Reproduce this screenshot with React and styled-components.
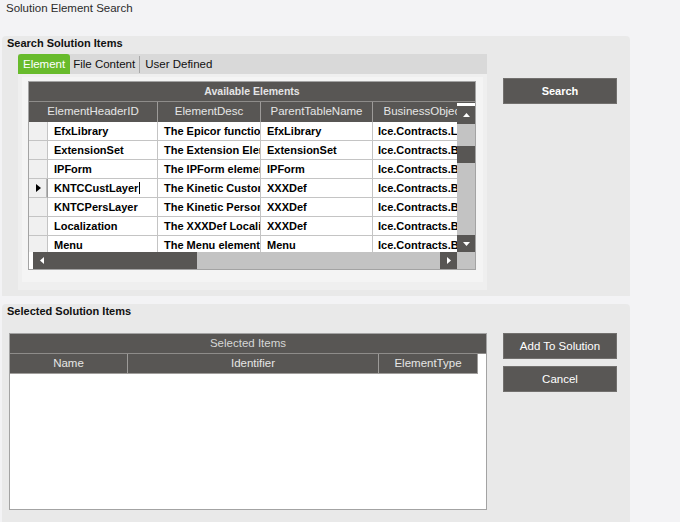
import React from "react";
import styled, { createGlobalStyle } from "styled-components";

const DARK = "#585654";
const GREEN = "#68bb2c";
const LINE = "#c4c4c4";

const GlobalStyle = createGlobalStyle`
  html, body {
    margin: 0;
    padding: 0;
    background: #f3f3f5;
  }
  body {
    font-family: "Liberation Sans", Arial, sans-serif;
  }
  * {
    box-sizing: border-box;
  }
`;

const Screen = styled.div`
  width: 680px;
  height: 522px;
  overflow: hidden;
  background: #f3f3f5;
`;

const WindowTitle = styled.div`
  height: 36px;
  padding: 1px 0 0 6px;
  font-size: 11.5px;
  line-height: 14px;
  color: #2b2b2b;
`;

const Panel = styled.div`
  margin: ${(p) => p.$gap || 0}px 0 0 2px;
  width: 628px;
  height: ${(p) => p.$height}px;
  background: #e9e9e9;
  border-radius: 4px 4px 0 0;
`;

const PanelHeader = styled.div`
  height: ${(p) => p.$height}px;
  padding: 1px 0 0 5px;
  font-size: 11px;
  font-weight: bold;
  line-height: 13px;
  color: #111;
`;

const PanelBody = styled.div`
  display: flex;
  align-items: flex-start;
  padding-left: ${(p) => p.$indent}px;
`;

const SideColumn = styled.div`
  display: flex;
  flex-direction: column;
  gap: 7px;
  width: 114px;
  margin-left: 16px;
  padding-top: ${(p) => p.$top || 0}px;
`;

const ActionButton = styled.button`
  height: 26px;
  width: 100%;
  padding: 0;
  background: #595755;
  border: 1px solid #72706e;
  color: #fff;
  font-family: inherit;
  font-size: ${(p) => (p.$bold ? "11px" : "11.5px")};
  font-weight: ${(p) => (p.$bold ? "bold" : "normal")};
  cursor: pointer;
`;

/* tab control */
const TabControl = styled.div`
  width: 469px;
  height: 236px;
  display: flex;
  flex-direction: column;
`;

const TabStrip = styled.div`
  height: 20px;
  flex: none;
  display: flex;
  align-items: stretch;
  background: #d9d9d9;
`;

const Tab = styled.div`
  display: flex;
  align-items: center;
  padding: 0 ${(p) => (p.$active ? 5 : 3)}px;
  font-size: 11.5px;
  color: ${(p) => (p.$active ? "#fff" : "#111")};
  background: ${(p) => (p.$active ? GREEN : "transparent")};
  border-radius: 3px 3px 0 0;
`;

const TabDivider = styled.span`
  width: 1px;
  margin: 2px 2px 1px 1px;
  background: #a9a9a9;
`;

const TabFrame = styled.div`
  flex: 1;
  padding: 3px 4px 8px 4px;
  background: #efefef;
`;

const TabPage = styled.div`
  height: 100%;
  padding: 4px 0 0 6px;
  background: #f4f4f4;
`;

/* grids */
const DataGrid = styled.div`
  width: ${(p) => p.$w}px;
  height: ${(p) => p.$h}px;
  border: 1px solid #a3a3a3;
  background: ${(p) => p.$bg};
  display: flex;
  flex-direction: column;
  overflow: hidden;
`;

const GridTitle = styled.div`
  height: 20px;
  flex: none;
  background: ${DARK};
  border-bottom: 1px solid #8e8c8a;
  color: ${(p) => (p.$plain ? "#d6d6d6" : "#e4e4e4")};
  font-size: ${(p) => (p.$plain ? "11.5px" : "10.5px")};
  font-weight: ${(p) => (p.$plain ? "normal" : "bold")};
  line-height: 19px;
  text-align: center;
`;

const GridBody = styled.div`
  flex: 1;
  display: flex;
  min-height: 0;
`;

const GridMain = styled.div`
  width: 428px;
  flex: none;
  display: flex;
  flex-direction: column;
  overflow: hidden;
`;

const HeaderRow = styled.div`
  display: flex;
  flex: none;
  height: 20px;
  width: ${(p) => (p.$w ? `${p.$w}px` : "auto")};
  background: ${DARK};
  border-bottom: ${(p) => (p.$edged ? "1px solid #a09e9c" : "none")};
  overflow: hidden;
`;

const HeaderCell = styled.div`
  width: ${(p) => p.$w}px;
  flex: none;
  border-right: 1px solid #9d9b99;
  color: #e6e6e6;
  font-size: 11.5px;
  line-height: 19px;
  text-align: center;
  white-space: nowrap;
  overflow: hidden;
`;

const RowsViewport = styled.div`
  height: 130px;
  flex: none;
  overflow: hidden;
  background: #fff;
`;

const Row = styled.div`
  display: flex;
  height: 19px;
`;

const Selector = styled.div`
  width: 19px;
  flex: none;
  display: flex;
  align-items: center;
  justify-content: center;
  padding-left: 1px;
  background: #f0f0f0;
  border-right: 1px solid ${(p) => (p.$current ? "#9a9a9a" : LINE)};
  border-bottom: 1px solid ${LINE};
  box-shadow: ${(p) => (p.$current ? "inset -1px 0 0 #b8b8b8" : "none")};
`;

const Cell = styled.div`
  width: ${(p) => p.$w}px;
  flex: none;
  padding-left: ${(p) => (p.$last ? 5 : 6)}px;
  border-right: 1px solid ${LINE};
  border-bottom: 1px solid ${LINE};
  font-size: 11px;
  font-weight: bold;
  line-height: 18px;
  color: #000;
  white-space: nowrap;
  overflow: hidden;
`;

const Caret = styled.span`
  display: inline-block;
  width: 1px;
  height: 12px;
  margin-left: 1px;
  vertical-align: -2px;
  background: #000;
`;

/* scroll bars */
const HScroll = styled.div`
  height: 17px;
  flex: none;
  display: flex;
  background: #c3c3c3;
`;

const VScroll = styled.div`
  width: 18px;
  flex: none;
  display: flex;
  flex-direction: column;
  background: #c3c3c3;
`;

const ScrollGap = styled.div`
  flex: none;
  width: ${(p) => (p.$vertical ? "auto" : "4px")};
  height: ${(p) => (p.$vertical ? "4px" : "auto")};
  background: #fff;
  border-top: ${(p) => (p.$vertical ? `1px solid ${DARK}` : "none")};
`;

const ScrollPart = styled.div`
  flex: ${(p) => (p.$grow ? 1 : "none")};
  width: ${(p) => (p.$vertical ? "auto" : `${p.$len}px`)};
  height: ${(p) => (p.$vertical ? `${p.$len}px` : "auto")};
  background: ${(p) => (p.$dark ? DARK : "transparent")};
  display: flex;
  align-items: center;
  justify-content: center;
`;

const Arrow = ({ dir, color = "#fff" }) => {
  const shapes = {
    up: { w: 7, h: 4, pts: "0,4 3.5,0 7,4" },
    down: { w: 7, h: 4, pts: "0,0 7,0 3.5,4" },
    left: { w: 4, h: 7, pts: "4,0 4,7 0,3.5" },
    right: { w: 4, h: 7, pts: "0,0 4,3.5 0,7" },
    row: { w: 5, h: 8, pts: "0,0 5,4 0,8" },
  };
  const s = shapes[dir];
  return (
    <svg width={s.w} height={s.h} viewBox={`0 0 ${s.w} ${s.h}`}>
      <polygon points={s.pts} fill={color} />
    </svg>
  );
};

const elements = [
  ["EfxLibrary", "The Epicor function library", "EfxLibrary", "Ice.Contracts.Lib.EfxLibrary"],
  ["ExtensionSet", "The Extension Element", "ExtensionSet", "Ice.Contracts.BO.ExtensionSet"],
  ["IPForm", "The IPForm element", "IPForm", "Ice.Contracts.BO.IPForm"],
  ["KNTCCustLayer", "The Kinetic Customization", "XXXDef", "Ice.Contracts.BO.XXXDef"],
  ["KNTCPersLayer", "The Kinetic Personalization", "XXXDef", "Ice.Contracts.BO.XXXDef"],
  ["Localization", "The XXXDef Localization", "XXXDef", "Ice.Contracts.BO.XXXDef"],
  ["Menu", "The Menu element", "Menu", "Ice.Contracts.BO.Menu"],
];

const widths = [110, 103, 112, 102];
const currentRow = 3;

const AvailableGrid = () => (
  <DataGrid $w={448} $h={189} $bg="#c3c3c3">
    <GridTitle>Available Elements</GridTitle>
    <GridBody>
      <GridMain>
        <HeaderRow>
          <HeaderCell $w={129}>ElementHeaderID</HeaderCell>
          <HeaderCell $w={103}>ElementDesc</HeaderCell>
          <HeaderCell $w={112}>ParentTableName</HeaderCell>
          <HeaderCell $w={102}>BusinessObject</HeaderCell>
        </HeaderRow>
        <RowsViewport>
          {elements.map((row, i) => (
            <Row key={row[0]}>
              <Selector $current={i === currentRow}>
                {i === currentRow && <Arrow dir="row" color="#000" />}
              </Selector>
              {row.map((text, c) => (
                <Cell key={c} $w={widths[c]} $last={c === 3}>
                  {text}
                  {i === currentRow && c === 0 && <Caret />}
                </Cell>
              ))}
            </Row>
          ))}
        </RowsViewport>
        <HScroll>
          <ScrollGap />
          <ScrollPart $len={17} $dark>
            <Arrow dir="left" />
          </ScrollPart>
          <ScrollPart $len={147} $dark />
          <ScrollPart $grow />
          <ScrollPart $len={17} $dark>
            <Arrow dir="right" />
          </ScrollPart>
        </HScroll>
      </GridMain>
      <VScroll>
        <ScrollGap $vertical />
        <ScrollPart $vertical $len={18} $dark>
          <Arrow dir="up" />
        </ScrollPart>
        <ScrollPart $vertical $len={22} />
        <ScrollPart $vertical $len={17} $dark />
        <ScrollPart $vertical $grow />
        <ScrollPart $vertical $len={17} $dark>
          <Arrow dir="down" />
        </ScrollPart>
        <ScrollPart $vertical $len={17} />
      </VScroll>
    </GridBody>
  </DataGrid>
);

const SelectedGrid = () => (
  <DataGrid $w={478} $h={177} $bg="#fff">
    <GridTitle $plain>Selected Items</GridTitle>
    <HeaderRow $w={468} $edged>
      <HeaderCell $w={118}>Name</HeaderCell>
      <HeaderCell $w={251}>Identifier</HeaderCell>
      <HeaderCell $w={99}>ElementType</HeaderCell>
    </HeaderRow>
  </DataGrid>
);

export default function App() {
  return (
    <Screen>
      <GlobalStyle />
      <WindowTitle>Solution Element Search</WindowTitle>

      <Panel $height={260}>
        <PanelHeader $height={18}>Search Solution Items</PanelHeader>
        <PanelBody $indent={16}>
          <TabControl>
            <TabStrip>
              <Tab $active>Element</Tab>
              <Tab>File Content</Tab>
              <TabDivider />
              <Tab>User Defined</Tab>
            </TabStrip>
            <TabFrame>
              <TabPage>
                <AvailableGrid />
              </TabPage>
            </TabFrame>
          </TabControl>
          <SideColumn $top={24}>
            <ActionButton $bold>Search</ActionButton>
          </SideColumn>
        </PanelBody>
      </Panel>

      <Panel $gap={8} $height={230}>
        <PanelHeader $height={29}>Selected Solution Items</PanelHeader>
        <PanelBody $indent={7}>
          <SelectedGrid />
          <SideColumn>
            <ActionButton>Add To Solution</ActionButton>
            <ActionButton>Cancel</ActionButton>
          </SideColumn>
        </PanelBody>
      </Panel>
    </Screen>
  );
}
